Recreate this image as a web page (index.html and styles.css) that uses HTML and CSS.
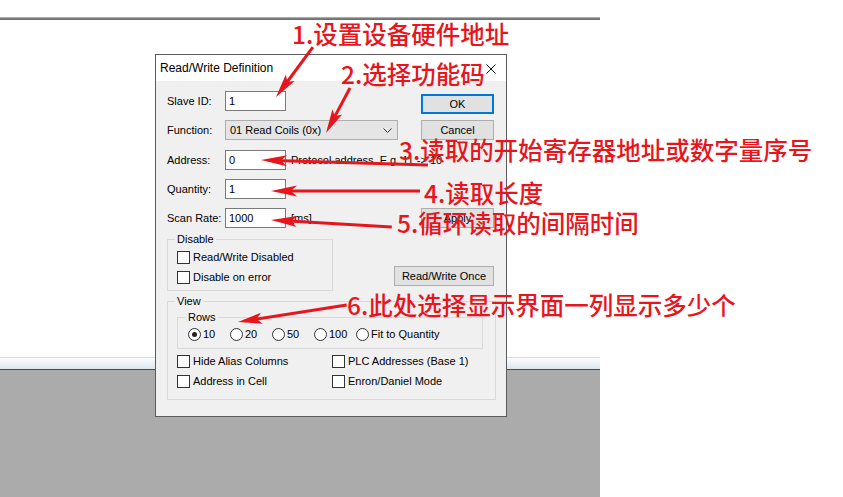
FILE: index.html
```html
<!DOCTYPE html>
<html lang="zh-CN">
<head>
<meta charset="utf-8">
<title>Read/Write Definition</title>
<link rel="stylesheet" href="styles.css">
</head>
<body>
<div class="desk">
  <div class="app">
    <div class="app-top"></div>
    <div class="app-line"></div>
    <div class="app-white"></div>
    <div class="app-strip"></div>
    <div class="app-gray"></div>
  </div>

  <div class="dialog">
    <div class="titlebar">
      <span class="title">Read/Write Definition</span>
      <svg class="close" width="10" height="10" viewBox="0 0 10 10"><path d="M0.5 0.5 L9.5 9.5 M9.5 0.5 L0.5 9.5" stroke="#111" stroke-width="1" fill="none"/></svg>
    </div>
    <div class="dbody">
      <div class="form">
        <span class="lbl">Slave ID:</span>
        <div class="field"><div class="edit">1</div></div>
        <div class="btn btn-ok">OK</div>

        <span class="lbl">Function:</span>
        <div class="field"><div class="select"><span>01 Read Coils (0x)</span><svg class="chev" width="9" height="5" viewBox="0 0 9 5"><path d="M0.5 0.5 L4.5 4.5 L8.5 0.5" stroke="#333" stroke-width="1" fill="none"/></svg></div></div>
        <div class="btn">Cancel</div>

        <span class="lbl">Address:</span>
        <div class="field"><div class="edit">0</div><span class="hint">Protocol address. E.g. 11 -&gt; 10</span></div>
        <div></div>

        <span class="lbl">Quantity:</span>
        <div class="field"><div class="edit">1</div></div>
        <div></div>

        <span class="lbl">Scan Rate:</span>
        <div class="field"><div class="edit">1000</div><span class="hint">[ms]</span></div>
        <div class="btn">Apply</div>
      </div>

      <div class="row-disable">
        <fieldset class="grp grp-disable">
          <legend>Disable</legend>
          <div class="chk"><span class="box"></span>Read/Write Disabled</div>
          <div class="chk"><span class="box"></span>Disable on error</div>
        </fieldset>
        <div class="btn btn-once">Read/Write Once</div>
      </div>

      <fieldset class="grp grp-view">
        <legend>View</legend>
        <fieldset class="grp grp-rows">
          <legend>Rows</legend>
          <div class="radios">
            <div class="rad"><span class="dot on"></span>10</div>
            <div class="rad"><span class="dot"></span>20</div>
            <div class="rad"><span class="dot"></span>50</div>
            <div class="rad"><span class="dot"></span>100</div>
            <div class="rad"><span class="dot"></span>Fit to Quantity</div>
          </div>
        </fieldset>
        <div class="chkgrid">
          <div class="chk"><span class="box"></span>Hide Alias Columns</div>
          <div class="chk"><span class="box"></span>PLC Addresses (Base 1)</div>
          <div class="chk"><span class="box"></span>Address in Cell</div>
          <div class="chk"><span class="box"></span>Enron/Daniel Mode</div>
        </div>
      </fieldset>
    </div>
  </div>

  <div class="note n1">1.设置设备硬件地址</div>
  <div class="note n2">2.选择功能码</div>
  <div class="note n3">3.读取的开始寄存器地址或数字量序号</div>
  <div class="note n4">4.读取长度</div>
  <div class="note n5">5.循环读取的间隔时间</div>
  <div class="note n6">6.此处选择显示界面一列显示多少个</div>

  <svg class="arrows" width="843" height="497" viewBox="0 0 843 497">
    <g fill="#e8151d" stroke="#e8151d">
      <g transform="translate(276 97) rotate(126.5)">
        <line x1="-62" y1="0" x2="-14" y2="0" stroke-width="3"/>
        <polygon points="0,0 -24,-5.5 -19,0 -24,5.5" stroke="none"/>
      </g>
      <g transform="translate(326 133) rotate(118.07)">
        <line x1="-51" y1="0" x2="-14" y2="0" stroke-width="3"/>
        <polygon points="0,0 -24,-5.5 -19,0 -24,5.5" stroke="none"/>
      </g>
      <g transform="translate(261 160) rotate(181.71)">
        <line x1="-167" y1="0" x2="-14" y2="0" stroke-width="3"/>
        <polygon points="0,0 -26,-5.5 -20,0 -26,5.5" stroke="none"/>
      </g>
      <g transform="translate(271 191) rotate(180)">
        <line x1="-149" y1="0" x2="-14" y2="0" stroke-width="3"/>
        <polygon points="0,0 -26,-5.5 -20,0 -26,5.5" stroke="none"/>
      </g>
      <g transform="translate(271 220) rotate(183.31)">
        <line x1="-121" y1="0" x2="-14" y2="0" stroke-width="3"/>
        <polygon points="0,0 -26,-5.5 -20,0 -26,5.5" stroke="none"/>
      </g>
      <g transform="translate(238 322) rotate(171.14)">
        <line x1="-110" y1="0" x2="-14" y2="0" stroke-width="3"/>
        <polygon points="0,0 -24,-5.5 -19,0 -24,5.5" stroke="none"/>
      </g>
    </g>
  </svg>
</div>
</body>
</html>
```

FILE: styles.css
```css
* { box-sizing: border-box; }

html, body {
  margin: 0;
  padding: 0;
  background: #ffffff;
}

body {
  font-family: "Liberation Sans", Arial, sans-serif;
  font-size: 11px;
  color: #000;
}

.desk {
  position: relative;
  width: 843px;
  height: 497px;
  overflow: hidden;
}

/* background application window */
.app {
  width: 600px;
  height: 497px;
  display: flex;
  flex-direction: column;
}
.app-top { height: 17px; background: #fff; }
.app-line {
  height: 3px;
  background: linear-gradient(#c4c4c4, #7c7c7c 50%, #6a6a6a);
}
.app-white { height: 337px; background: #fff; }
.app-strip {
  height: 13px;
  border-top: 1px solid #dcdcdc;
  border-bottom: 1px solid #4a4a4a;
  background: linear-gradient(#fbfcfd, #f3f6f9 30%, #dbe5ef);
}
.app-gray { flex: 1; background: #ababab; }

/* dialog window */
.dialog {
  position: absolute;
  left: 155px;
  top: 54px;
  width: 352px;
  height: 363px;
  border: 1px solid #5b5b5b;
  background: #f0f0f0;
  display: flex;
  flex-direction: column;
}
.titlebar {
  height: 26px;
  background: #fff;
  display: flex;
  align-items: center;
  justify-content: space-between;
  padding: 0 10px 0 4px;
}
.title {
  font-size: 12px;
  color: #000;
}
.close { display: block; margin-top: 1px; }

.dbody {
  flex: 1;
  padding: 10px 10px 0 11px;
}

.form {
  display: grid;
  grid-template-columns: 58px 196px 75px;
  grid-template-rows: repeat(5, 20px);
  row-gap: 9.25px;
  align-items: center;
}
.lbl { white-space: nowrap; }
.field {
  display: flex;
  align-items: center;
  height: 20px;
  min-width: 0;
}
.edit {
  flex: none;
  width: 61px;
  height: 20px;
  border: 1px solid #7a7a7a;
  background: #fff;
  padding-left: 3px;
  line-height: 18px;
}
.hint {
  flex: none;
  margin-left: 5px;
  white-space: nowrap;
}
.select {
  flex: none;
  width: 173px;
  height: 20px;
  border: 1px solid #adadad;
  background: #e5e5e5;
  display: flex;
  align-items: center;
  justify-content: space-between;
  padding: 0 5px 0 4px;
}
.chev { display: block; }

.btn {
  width: 73px;
  height: 20px;
  border: 1px solid #adadad;
  background: #e1e1e1;
  text-align: center;
  line-height: 18px;
  white-space: nowrap;
}
.btn-ok {
  border: 2px solid #0078d7;
  line-height: 16px;
  align-self: start;
  margin-top: 3px;
}

.row-disable {
  display: flex;
  margin-top: 5px;
}
.btn-once {
  width: 100px;
  margin-left: auto;
  margin-right: 2px;
  margin-top: 33px;
}

/* group boxes */
.grp {
  margin: 0;
  min-width: 0;
  border: 1px solid #d9d9d9;
}
.grp > legend {
  padding: 0 2px;
  margin-left: -2px;
  line-height: 13px;
  font-size: 11px;
}
.grp-disable {
  width: 166px;
  padding: 1px 9px 3px 9px;
}
.grp-view {
  margin-top: 4px;
  padding: 3px 12px 8px 9px;
}
.grp-rows {
  padding: 0 9px 4px 10px;
}

.chk {
  height: 20px;
  display: flex;
  align-items: center;
  white-space: nowrap;
}
.box {
  width: 13px;
  height: 13px;
  border: 1px solid #333;
  background: #fff;
  margin-right: 3px;
  flex: none;
}

.radios {
  display: flex;
  height: 20px;
  align-items: center;
}
.rad {
  width: 42px;
  display: flex;
  align-items: center;
  white-space: nowrap;
}
.rad:last-child { width: auto; }
.dot {
  width: 13px;
  height: 13px;
  border: 1px solid #333;
  border-radius: 50%;
  background: #fff;
  margin-right: 2px;
  flex: none;
  display: flex;
  align-items: center;
  justify-content: center;
}
.dot.on::after {
  content: "";
  width: 5px;
  height: 5px;
  border-radius: 50%;
  background: #222;
}

.chkgrid {
  margin-top: 2px;
  display: grid;
  grid-template-columns: 155px 1fr;
  grid-auto-rows: 20px;
}

/* red annotations */
.note {
  position: absolute;
  color: #e8151d;
  font-family: "Noto Sans CJK SC", "Noto Sans", sans-serif;
  font-size: 24.5px;
  line-height: 24px;
  font-weight: 500;
  white-space: nowrap;
}
.n1 { left: 292px; top: 22px; }
.n2 { left: 341px; top: 62px; }
.n3 { left: 399px; top: 138px; }
.n4 { left: 424px; top: 181px; }
.n5 { left: 397px; top: 211px; }
.n6 { left: 347px; top: 293px; }

.arrows {
  position: absolute;
  left: 0;
  top: 0;
  pointer-events: none;
}
```
